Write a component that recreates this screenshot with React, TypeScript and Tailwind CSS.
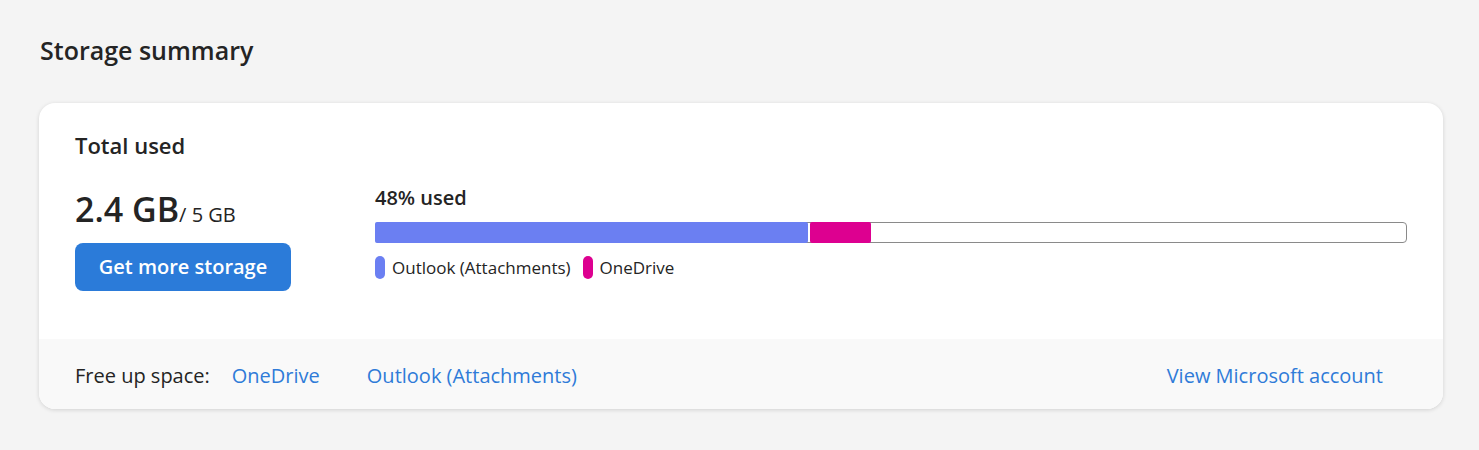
const font = { fontFamily: '"Open Sans", "Noto Sans", sans-serif' };

const segments = [
  { label: "Outlook (Attachments)", color: "bg-[#6b7ff2]", width: 433 },
  { label: "OneDrive", color: "bg-[#dd0090]", width: 61 },
];

export default function App() {
  return (
    <div style={font} className="min-h-[450px] w-full bg-[#f4f4f4] pl-[39px] pr-[36px] pt-[32px] text-[#242424]">
      <h2 className="pl-px text-[25px] font-semibold leading-[36px]">Storage summary</h2>

      <div className="mt-[35px] overflow-hidden rounded-[16px] bg-white shadow-[0_1px_4px_rgba(0,0,0,0.14)]">
        <div className="px-[36px] pb-[48px] pt-[28px]">
          <h3 className="text-[22px] font-semibold leading-[28px]">Total used</h3>

          <div className="mt-[26px] flex">
            <div className="w-[300px] shrink-0 pt-[4px]">
              <div className="flex items-baseline">
                <span className="text-[34px] font-semibold leading-[40px]">2.4 GB</span>
                <span className="text-[20px] leading-[24px]">/ 5 GB</span>
              </div>
              <button className="mt-[14px] h-[48px] w-[216px] rounded-[8px] bg-[#2b7bd9] text-[20px] font-semibold text-white">
                Get more storage
              </button>
            </div>

            <div className="flex-1">
              <div className="text-[20px] font-semibold leading-[26px]">48% used</div>
              <div className="mt-[11px] flex h-[21px] gap-[2px] rounded-[4px] border border-[#8a8a8a] bg-white">
                {segments.map((s) => (
                  <div
                    key={s.label}
                    className={`${s.color} -my-px h-[21px] rounded-[2px] first:-ml-px`}
                    style={{ width: s.width }}
                  />
                ))}
              </div>
              <div className="mt-[12px] flex items-center gap-[12px]">
                {segments.map((s) => (
                  <div key={s.label} className="flex items-center gap-[7px]">
                    <span className={`${s.color} h-[23px] w-[10px] rounded-full`} />
                    <span className="pt-px text-[17px] leading-[24px]">{s.label}</span>
                  </div>
                ))}
              </div>
            </div>
          </div>
        </div>

        <div className="flex h-[70px] items-center bg-[#f9f9f9] pl-[36px] pr-[60px] pt-[3px] text-[20px]">
          <span className="text-[#242424]">Free up space:</span>
          <a className="ml-[22px] text-[#2f7bd8]">OneDrive</a>
          <a className="ml-[47px] text-[#2f7bd8]">Outlook (Attachments)</a>
          <a className="ml-auto text-[#2f7bd8]">View Microsoft account</a>
        </div>
      </div>
    </div>
  );
}
